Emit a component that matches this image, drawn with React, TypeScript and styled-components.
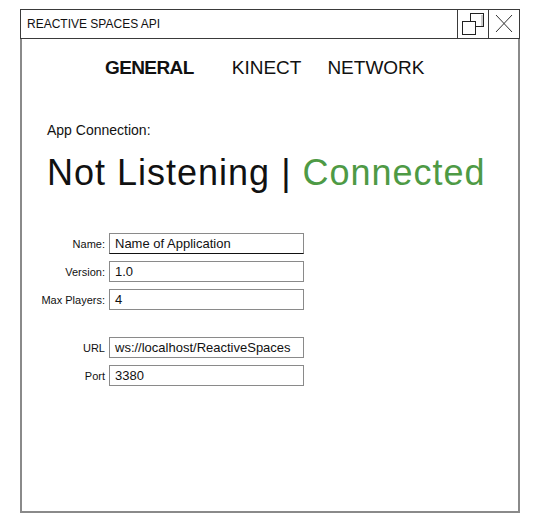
import { Fragment } from "react";
import styled, { createGlobalStyle } from "styled-components";

const GlobalStyle = createGlobalStyle`
	body {
		margin: 0;
		background: #ffffff;
		font-family: "Liberation Sans", Arial, sans-serif;
		color: #111111;
	}
`;

/* WINDOW */

const Window = styled.div`
	margin: 9px 0 0 20px;
	width: 500px;
	height: 504px;
	display: flex;
	flex-direction: column;
`;

const TitleBar = styled.div`
	height: 30px;
	box-sizing: border-box;
	border: 1px solid #3a3a3a;
	display: flex;
`;

const Title = styled.div`
	flex: 1;
	padding-left: 6px;
	font-size: 12px;
	line-height: 28px;
	color: #111;
`;

const WinButton = styled.div`
	width: 30px;
	border-left: 1px solid #3a3a3a;
	display: flex;
	align-items: center;
	justify-content: center;
`;

const Body = styled.div`
	flex: 1;
	border: 2px solid #8a8a8a;
	border-top: none;
`;

/* TABS */

const Tabs = styled.div`
	display: flex;
	padding: 18px 0 0 83px;
`;

const Tab = styled.div<{ $active?: boolean }>`
	font-size: 19px;
	line-height: 22px;
	font-weight: ${(p) => (p.$active ? 700 : 400)};
	letter-spacing: ${(p) => (p.$active ? "-0.6px" : "0")};
	margin-right: ${(p) => (p.$active ? "38px" : "26px")};
	color: #111;
`;

/* STATUS */

const Status = styled.div`
	padding: 43px 0 0 25px;
`;

const StatusLabel = styled.div`
	font-size: 14px;
	line-height: 16px;
	color: #111;
`;

const StatusLine = styled.div`
	margin-top: 14px;
	font-size: 36px;
	line-height: 42px;
	letter-spacing: 1px;
	color: #111;
`;

const Good = styled.span`
	color: #4e9a45;
`;

/* FORM */

const Form = styled.div<{ $top: number }>`
	display: grid;
	grid-template-columns: 83px 195px;
	column-gap: 4px;
	row-gap: 7px;
	align-items: center;
	margin-top: ${(p) => p.$top}px;
`;

const Label = styled.div`
	font-size: 11px;
	text-align: right;
	color: #111;
`;

const Field = styled.div<{ $focused?: boolean }>`
	height: 21px;
	box-sizing: border-box;
	border: 1px solid #8a8a8a;
	border-bottom-color: ${(p) => (p.$focused ? "#111" : "#8a8a8a")};
	padding-left: 5px;
	font-size: 13px;
	line-height: 19px;
	white-space: nowrap;
	overflow: hidden;
	color: #111;
`;

const RestoreIcon = () => (
	<svg width="30" height="30" viewBox="0 0 30 30">
		<rect x="12.5" y="4.5" width="13" height="13" fill="none" stroke="#222" />
		<line x1="24" y1="6" x2="24" y2="17" stroke="#999" />
		<rect x="4.5" y="12.5" width="13" height="13" fill="#fff" stroke="#222" />
	</svg>
);

const CloseIcon = () => (
	<svg width="30" height="30" viewBox="0 0 30 30">
		<path d="M7 6 L23 23 M23 6 L7 23" stroke="#333" strokeWidth="1" fill="none" />
	</svg>
);

const fields = [
	{ label: "Name:", value: "Name of Application", focused: true },
	{ label: "Version:", value: "1.0" },
	{ label: "Max Players:", value: "4" },
];

const network = [
	{ label: "URL", value: "ws://localhost/ReactiveSpaces" },
	{ label: "Port", value: "3380" },
];

export default function App() {
	return (
		<>
			<GlobalStyle />
			<Window>
				<TitleBar>
					<Title>REACTIVE SPACES API</Title>
					<WinButton>
						<RestoreIcon />
					</WinButton>
					<WinButton>
						<CloseIcon />
					</WinButton>
				</TitleBar>
				<Body>
					<Tabs>
						<Tab $active>GENERAL</Tab>
						<Tab>KINECT</Tab>
						<Tab>NETWORK</Tab>
					</Tabs>
					<Status>
						<StatusLabel>App Connection:</StatusLabel>
						<StatusLine>
							Not Listening | <Good>Connected</Good>
						</StatusLine>
					</Status>
					<Form $top={39}>
						{fields.map((f) => (
							<Fragment key={f.label}>
								<Label>{f.label}</Label>
								<Field $focused={f.focused}>{f.value}</Field>
							</Fragment>
						))}
					</Form>
					<Form $top={27}>
						{network.map((f) => (
							<Fragment key={f.label}>
								<Label>{f.label}</Label>
								<Field>{f.value}</Field>
							</Fragment>
						))}
					</Form>
				</Body>
			</Window>
		</>
	);
}
